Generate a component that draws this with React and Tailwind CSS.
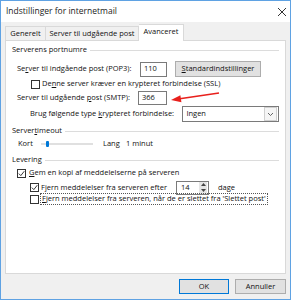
import React from "react"

const font = { fontFamily: '"Open Sans", "Noto Sans", sans-serif' }

function Check({ checked }) {
  return (
    <span className="w-[9px] h-[9px] border border-[#333333] bg-white flex items-center justify-center shrink-0">
      {checked && (
        <svg width="7" height="7" viewBox="0 0 7 7">
          <path d="M0.8 3.6 L2.8 5.6 L6.3 1.2" fill="none" stroke="#222" strokeWidth="0.9" />
        </svg>
      )}
    </span>
  )
}

function Group({ label }) {
  return (
    <div className="flex items-center h-[12px] gap-[3px]">
      <span>{label}</span>
      <div className="flex-1 h-px bg-[#dcdcdc]"></div>
    </div>
  )
}

export default function App() {
  return (
    <div
      className="relative w-[291px] h-[300px] border border-[#5fa2e3] bg-[#f0f0f0] flex flex-col text-[7.5px] leading-none text-[#111] whitespace-nowrap"
      style={font}
    >
      {/* title bar */}
      <div className="h-[21px] bg-white flex items-center justify-between pl-[5px] pr-[3px] shrink-0">
        <span className="text-[8.5px] text-[#222]">Indstillinger for internetmail</span>
        <svg width="10" height="10" viewBox="0 0 10 10">
          <path d="M1 1 L9 9 M9 1 L1 9" stroke="#333" strokeWidth="1" />
        </svg>
      </div>

      {/* tabs */}
      <div className="h-[18px] flex items-end pl-[4px] shrink-0">
        <div className="w-[41px] h-[14px] border border-b-0 border-[#d9d9d9] flex items-center justify-center">
          Generelt
        </div>
        <div className="w-[93px] h-[14px] border border-b-0 border-l-0 border-[#d9d9d9] flex items-center justify-center">
          Server til udgående post
        </div>
        <div className="relative z-10 -mb-px w-[45px] h-[17px] bg-white border border-b-0 border-l-0 border-[#d9d9d9] flex items-center justify-center pb-[2px]">
          Avanceret
        </div>
      </div>

      {/* panel */}
      <div className="ml-[4px] w-[281px] h-[234px] border border-[#d9d9d9] bg-white flex flex-col px-[6px] shrink-0">
        <div className="mt-[3px]">
          <Group label="Serverens portnumre" />
        </div>

        <div className="mt-[5px] h-[16px] flex items-center pl-[5px]">
          <span className="w-[123px]">
            Se<u>r</u>ver til indgående post (POP3):
          </span>
          <div className="w-[27px] h-[15px] border border-[#7a7a7a] flex items-center pl-[3px]">110</div>
          <div className="ml-[8px] w-[86px] h-[16px] border border-[#adadad] bg-[#e1e1e1] flex items-center justify-center">
            <span>
              <u>S</u>tandardindstillinger
            </span>
          </div>
        </div>

        <div className="mt-[2px] h-[10px] flex items-center pl-[19px]">
          <Check />
          <span className="ml-[2px]">
            De<u>n</u>ne server kræver en krypteret forbindelse (SSL)
          </span>
        </div>

        <div className="mt-[2px] h-[14px] flex items-center pl-[5px]">
          <span className="w-[121px]">
            Server til udgående <u>p</u>ost (SMTP):
          </span>
          <div className="w-[29px] h-[14px] border border-[#7a7a7a] flex items-center pl-[3px]">366</div>
        </div>

        <div className="mt-[1px] h-[16px] flex items-center pl-[18px]">
          <span className="w-[153px]">
            Brug følgende type <u>k</u>rypteret forbindelse:
          </span>
          <div className="w-[97px] h-[16px] border border-[#7a7a7a] flex items-center">
            <span className="flex-1 pl-[3px]">Ingen</span>
            <div className="w-[13px] h-[14px] mr-px bg-[#f5f5f5] border border-[#d0d0d0] flex items-center justify-center">
              <svg width="7" height="5" viewBox="0 0 7 5">
                <path d="M1 1 L3.5 3.5 L6 1" fill="none" stroke="#555" strokeWidth="0.9" />
              </svg>
            </div>
          </div>
        </div>

        <div className="mt-[3px]">
          <Group
            label={
              <>
                Server<u>t</u>imeout
              </>
            }
          />
        </div>

        <div className="mt-[1px] h-[12px] flex items-center pl-[6px]">
          <span className="w-[23px]">Kort</span>
          <div className="relative w-[52px] h-[2px] bg-[#e0e0e0] flex items-center">
            <div className="absolute left-[5px] w-[3px] h-[6px] bg-[#0078d7] rounded-[1px]"></div>
          </div>
          <span className="ml-[10px] w-[23px]">Lang</span>
          <span>1 minut</span>
        </div>

        <div className="mt-[4px]">
          <Group label="Levering" />
        </div>

        <div className="mt-[2px] h-[10px] flex items-center pl-[5px]">
          <Check checked />
          <span className="ml-[3px]">
            <u>G</u>em en kopi af meddelelserne på serveren
          </span>
        </div>

        <div className="mt-[3px] h-[13px] flex items-center pl-[18px]">
          <Check checked />
          <span className="ml-[2px] w-[135px]">
            F<u>j</u>ern meddelelser fra serveren efter
          </span>
          <div className="w-[33px] h-[14px] border border-[#7a7a7a] flex items-center">
            <span className="flex-1 pl-[4px]">14</span>
            <div className="w-[8px] h-[12px] mr-px bg-[#e6e6e6] flex flex-col items-center justify-around">
              <svg width="5" height="3" viewBox="0 0 5 3">
                <path d="M0 3 L2.5 0 L5 3 Z" fill="#444" />
              </svg>
              <svg width="5" height="3" viewBox="0 0 5 3">
                <path d="M0 0 L2.5 3 L5 0 Z" fill="#444" />
              </svg>
            </div>
          </div>
          <span className="ml-[9px]">dage</span>
        </div>

        <div className="h-[10px] flex items-center pl-[18px]">
          <Check />
          <span className="ml-[1px] border border-dotted border-[#555] px-[1px] py-[1px]">
            <u>F</u>jern meddelelser fra serveren, når de er slettet fra 'Slettet post'
          </span>
        </div>
      </div>

      {/* buttons */}
      <div className="mt-[5px] flex justify-end gap-[6px] pr-[4px]">
        <div className="w-[50px] h-[15px] border border-[#0078d7] bg-[#e1e1e1] flex items-center justify-center">
          OK
        </div>
        <div className="w-[51px] h-[15px] border border-[#adadad] bg-[#e1e1e1] flex items-center justify-center">
          Annuller
        </div>
      </div>

      {/* red arrow annotation */}
      <svg className="absolute left-[165px] top-[87px]" width="58" height="16" viewBox="0 0 58 16">
        <path d="M53 5 L12 11" stroke="#e8201c" strokeWidth="1.6" fill="none" />
        <path d="M5 12 L15.4 14.2 L14.4 7.3 Z" fill="#e8201c" />
      </svg>
    </div>
  )
}
